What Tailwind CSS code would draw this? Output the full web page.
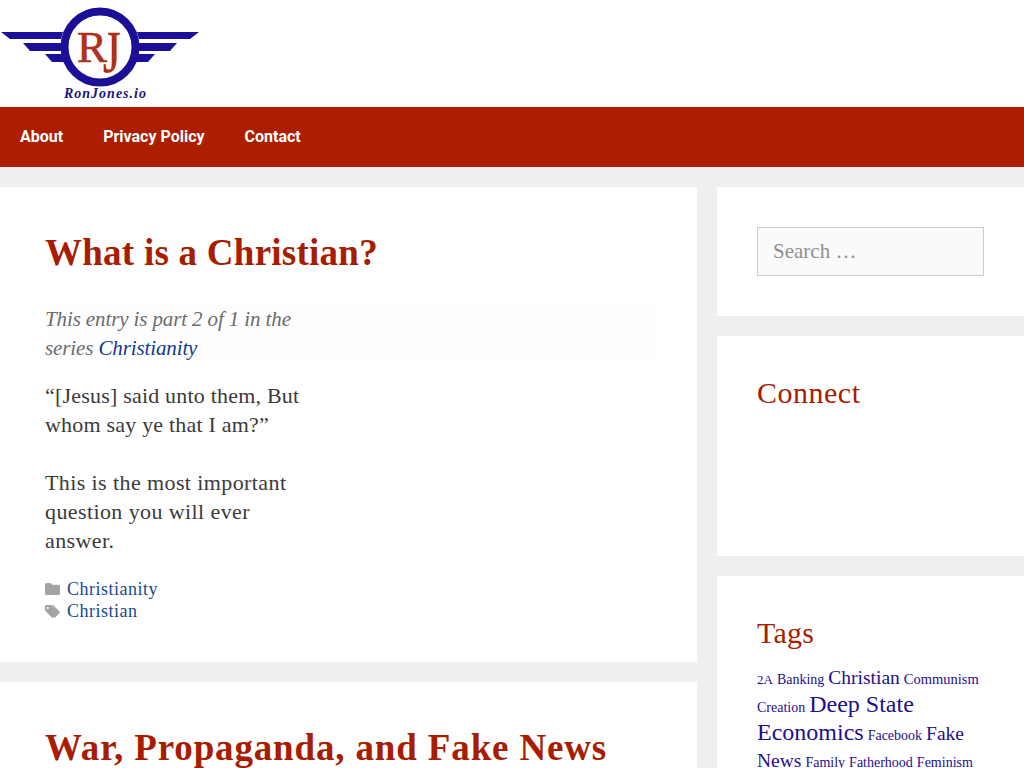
<!DOCTYPE html>
<html lang="en">
<head>
    <meta charset="UTF-8">
    <meta name="viewport" content="width=device-width, initial-scale=1.0">
    <title>RonJones.io</title>
    <script src="https://cdn.jsdelivr.net/npm/@tailwindcss/browser@4"></script>
</head>
<body class="bg-[#efefef] h-screen overflow-hidden font-['Liberation_Serif',serif] text-[#3a3a3a]">
    <header class="bg-white h-[107px]">
        <svg width="200" height="107" viewBox="0 0 200 107" class="block">
            <g fill="#1a0f96">
                <polygon points="1,32 63,32 61,39 10,39"/>
                <polygon points="23,43 61,43 63,51 30,51"/>
                <polygon points="45,54 66,54 70,62 52,62"/>
                <polygon points="199,32 137,32 139,39 190,39"/>
                <polygon points="177,43 139,43 137,51 170,51"/>
                <polygon points="155,54 134,54 130,62 148,62"/>
            </g>
            <circle cx="100" cy="47" r="35.5" fill="#fff" stroke="#1a0f96" stroke-width="8"/>
            <text x="77" y="62" font-size="45" fill="#b0301c" stroke="#b0301c" stroke-width="0.6" font-family="Liberation Serif">R</text>
            <text transform="translate(103 72) scale(1 1.33)" font-size="45" fill="#b0301c" stroke="#b0301c" stroke-width="0.5" font-family="Liberation Serif">J</text>
            <text x="64" y="98" font-size="14" font-weight="700" font-style="italic" letter-spacing="1" fill="#1a1480" font-family="Liberation Serif">RonJones.io</text>
        </svg>
    </header>

    <nav class="bg-[#ad1d00] h-[60px] flex items-center font-['Roboto',sans-serif] font-bold text-white text-[16px]">
        <a class="px-5">About</a>
        <a class="px-5">Privacy Policy</a>
        <a class="px-5">Contact</a>
    </nav>

    <div class="flex gap-5 mt-5 items-start">
        <main class="w-[697px] shrink-0 flex flex-col gap-5">
            <article class="bg-white h-[475px] pl-[45px] pt-[44px]">
                <h2 class="text-[37px] leading-[44px] font-bold text-[#a81c00] tracking-[0.25px]">What is a Christian?</h2>
                <div class="mt-[29px] w-[608px] py-[1px] bg-[#fefefe]">
                    <p class="w-[260px] text-[21px] leading-[29px] italic tracking-[-0.12px] text-[#6b6b6b]">This entry is part 2 of 1 in the series <a class="text-[#0f3a8c]">Christianity</a></p>
                </div>
                <p class="mt-[17px] w-[262px] text-[22px] leading-[29px] tracking-[0.2px]">“[Jesus] said unto them, But whom say ye that I am?”</p>
                <p class="mt-[29px] w-[262px] text-[22px] leading-[29px] tracking-[0.4px]">This is the most important question you will ever answer.</p>
                <div class="mt-[23px] text-[18px] leading-[22px] tracking-[0.5px] text-[#174a8c]">
                    <div class="flex items-center gap-[7px]">
                        <svg width="15" height="12" viewBox="0 0 15 12"><path fill="#a3a3a3" d="M1.5 0h4l1.5 1.7h6.5A1.5 1.5 0 0 1 15 3.2v7.3a1.5 1.5 0 0 1-1.5 1.5h-12A1.5 1.5 0 0 1 0 10.500v-9A1.500 1.500 0 0 1 1.500 0z"/></svg>
                        <a>Christianity</a>
                    </div>
                    <div class="flex items-center gap-[7px]">
                        <svg width="15" height="13" viewBox="0 0 15 13"><path fill="#a3a3a3" d="M0 1v4.500L7 12.500q.8.500 1.500 0L13 8q.6-.8 0-1.500L6 0H1Q0 0 0 1zM2.800 2a1 1 0 1 1 0 2.200 1 1 0 0 1 0-2.200z"/><path fill="#a3a3a3" d="M8 0l6.700 6.700q.5.700 0 1.300l-4.700 4.800-1-.8 4.300-4.500L6.500 0z"/></svg>
                        <a>Christian</a>
                    </div>
                </div>
            </article>
            <article class="bg-white h-[200px] pl-[45px] pt-[44px]">
                <h2 class="text-[37px] leading-[44px] font-bold text-[#a81c00] tracking-[0.85px]">War, Propaganda, and Fake News</h2>
            </article>
        </main>

        <aside class="flex-1 flex flex-col gap-5">
            <section class="bg-white h-[129px] pl-10 pt-10">
                <div class="w-[227px] h-[49px] border border-[#cccccc] bg-[#fafafa] px-[15px] flex items-center text-[21px] text-[#909090]">Search …</div>
            </section>
            <section class="bg-white h-[220px] pl-10 pt-10">
                <h3 class="text-[30px] leading-[34px] tracking-[0.5px] text-[#a81c00]">Connect</h3>
            </section>
            <section class="bg-white h-[300px] pl-10 pr-[40px] pt-10">
                <h3 class="text-[30px] leading-[34px] tracking-[0.25px] text-[#a81c00]">Tags</h3>
                <p class="mt-[15px] leading-[25px] text-[#1d0e8f]">
                    <a class="text-[13px]">2A</a>
                    <a class="text-[14px]">Banking</a>
                    <a class="text-[19.5px]">Christian</a>
                    <a class="text-[14.5px]">Communism</a>
                    <a class="text-[14px]">Creation</a>
                    <a class="text-[24px]">Deep State</a>
                    <a class="text-[24px]">Economics</a>
                    <a class="text-[14px]">Facebook</a>
                    <a class="text-[19.5px]">Fake News</a>
                    <a class="text-[14px]">Family</a>
                    <a class="text-[14px]">Fatherhood</a>
                    <a class="text-[14px]">Feminism</a>
                </p>
            </section>
        </aside>
    </div>
</body>
</html>
